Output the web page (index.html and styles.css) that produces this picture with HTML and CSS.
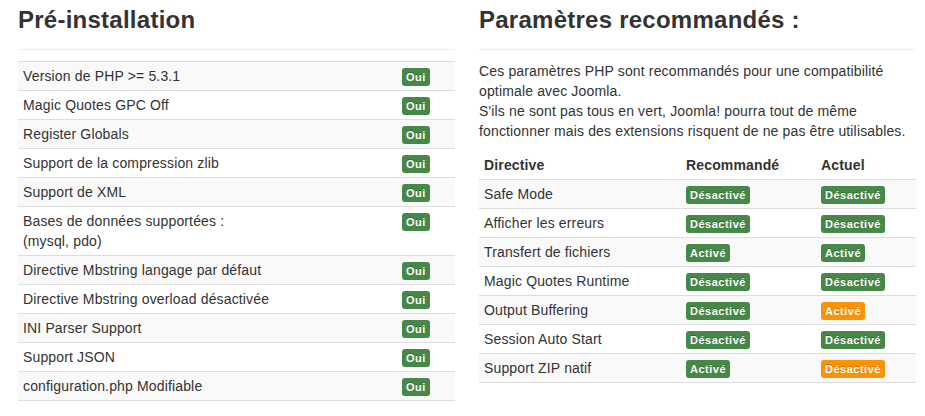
FILE: index.html
```html
<!DOCTYPE html>
<html lang="fr">
<head>
<meta charset="utf-8">
<title>Installation</title>
<link rel="stylesheet" href="styles.css">
</head>
<body>
<div class="page">
  <section class="col">
    <h3 class="title">Pré-installation</h3>
    <table class="grid checks">
      <tbody>
        <tr><td>Version de PHP &gt;= 5.3.1</td><td class="st"><span class="label ok">Oui</span></td></tr>
        <tr><td>Magic Quotes GPC Off</td><td class="st"><span class="label ok">Oui</span></td></tr>
        <tr><td>Register Globals</td><td class="st"><span class="label ok">Oui</span></td></tr>
        <tr><td>Support de la compression zlib</td><td class="st"><span class="label ok">Oui</span></td></tr>
        <tr><td>Support de XML</td><td class="st"><span class="label ok">Oui</span></td></tr>
        <tr><td>Bases de données supportées :<br>(mysql, pdo)</td><td class="st"><span class="label ok">Oui</span></td></tr>
        <tr><td>Directive Mbstring langage par défaut</td><td class="st"><span class="label ok">Oui</span></td></tr>
        <tr><td>Directive Mbstring overload désactivée</td><td class="st"><span class="label ok">Oui</span></td></tr>
        <tr><td>INI Parser Support</td><td class="st"><span class="label ok">Oui</span></td></tr>
        <tr><td>Support JSON</td><td class="st"><span class="label ok">Oui</span></td></tr>
        <tr><td>configuration.php Modifiable</td><td class="st"><span class="label ok">Oui</span></td></tr>
      </tbody>
    </table>
  </section>
  <section class="col">
    <h3 class="title">Paramètres recommandés :</h3>
    <p class="intro">Ces paramètres PHP sont recommandés pour une compatibilité optimale avec Joomla.<br>S'ils ne sont pas tous en vert, Joomla! pourra tout de même fonctionner mais des extensions risquent de ne pas être utilisables.</p>
    <table class="grid settings">
      <thead>
        <tr><th class="c1">Directive</th><th class="c2">Recommandé</th><th class="c3">Actuel</th></tr>
      </thead>
      <tbody>
        <tr><td>Safe Mode</td><td><span class="label ok">Désactivé</span></td><td><span class="label ok">Désactivé</span></td></tr>
        <tr><td>Afficher les erreurs</td><td><span class="label ok">Désactivé</span></td><td><span class="label ok">Désactivé</span></td></tr>
        <tr><td>Transfert de fichiers</td><td><span class="label ok">Activé</span></td><td><span class="label ok">Activé</span></td></tr>
        <tr><td>Magic Quotes Runtime</td><td><span class="label ok">Désactivé</span></td><td><span class="label ok">Désactivé</span></td></tr>
        <tr><td>Output Buffering</td><td><span class="label ok">Désactivé</span></td><td><span class="label warn">Activé</span></td></tr>
        <tr><td>Session Auto Start</td><td><span class="label ok">Désactivé</span></td><td><span class="label ok">Désactivé</span></td></tr>
        <tr><td>Support ZIP natif</td><td><span class="label ok">Activé</span></td><td><span class="label warn">Désactivé</span></td></tr>
      </tbody>
    </table>
  </section>
</div>
</body>
</html>
```
FILE: styles.css
```css
html, body {
  margin: 0;
  padding: 0;
  background: #fff;
}
body {
  font-family: "Liberation Sans", Arial, sans-serif;
  font-size: 14px;
  line-height: 20px;
  letter-spacing: 0.15px;
  color: #333;
}
.page {
  display: flex;
  gap: 24px;
  padding-left: 18px;
}
.col {
  width: 437px;
  flex: none;
}
.title {
  margin: 0 0 11px;
  height: 49px;
  font-size: 24px;
  line-height: 40px;
  font-weight: bold;
  letter-spacing: 0.25px;
  color: #333;
  border-bottom: 1px solid #eee;
}
.intro {
  margin: 0 0 10px;
}
.grid {
  width: 100%;
  border-collapse: collapse;
  border-spacing: 0;
  border-bottom: 1px solid #ddd;
}
.grid td, .grid th {
  padding: 4px 5px;
  text-align: left;
  vertical-align: top;
  border-top: 1px solid #ddd;
  line-height: 20px;
}
.grid thead th {
  border-top: 0;
  font-weight: bold;
}
.grid tbody tr:nth-child(odd) td {
  background: #f9f9f9;
}
.checks .st {
  width: 48px;
}
.settings .c1 { width: 192px; }
.settings .c2 { width: 125px; }
.label {
  display: inline-block;
  padding: 2px 4px;
  font-size: 11px;
  font-weight: bold;
  line-height: 14px;
  letter-spacing: 0.5px;
  color: #fff;
  text-shadow: 0 -1px 0 rgba(0, 0, 0, 0.25);
  border-radius: 3px;
  vertical-align: baseline;
  white-space: nowrap;
}
.label.ok { background: #468847; }
.label.warn { background: #f89406; }
```
